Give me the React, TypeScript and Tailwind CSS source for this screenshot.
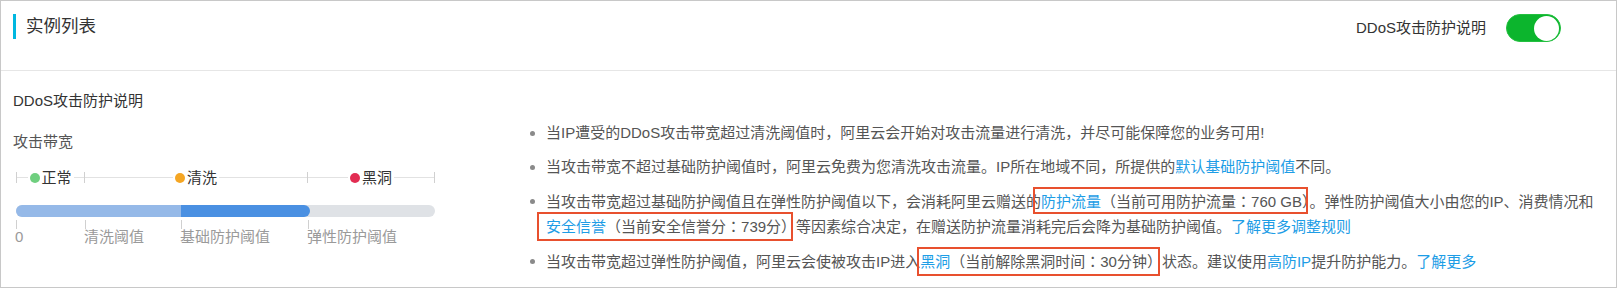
import React from "react";

const Box = ({ children, cls }: { children: React.ReactNode; cls: string }) => (
  <span className="relative">
    {children}
    <span className={"pointer-events-none absolute border-2 border-[#e8502e] " + cls} />
  </span>
);

const A = ({ children }: { children: React.ReactNode }) => (
  <span className="text-[#1d9de6]">{children}</span>
);

const P = ({ children }: { children: React.ReactNode }) => (
  <span style={{ fontFamily: '"Noto Sans CJK TC", sans-serif' }}>{children}</span>
);

const Li = ({ children }: { children: React.ReactNode }) => (
  <li className="flex items-start mb-[10px]">
    <span className="flex h-[24px] w-[25px] shrink-0 items-center pl-[9px]">
      <span className="h-[5px] w-[5px] rounded-full bg-[#8a8a8a]" />
    </span>
    <span className="w-[1060px]">{children}</span>
  </li>
);

export default function App() {
  return (
    <div
      className="h-[288px] w-[1617px] border border-[#c8c8c8] bg-white text-[15px] text-[#555]"
      style={{ fontFamily: '"Liberation Sans", "Noto Sans CJK SC", sans-serif' }}
    >
      <div className="flex h-[70px] justify-between border-b border-[#e6e6e6] px-[12px]">
        <div className="mt-[13px] flex h-[25px] items-center">
          <span className="h-[25px] w-[3px] bg-[#00b7e0]" />
          <span className="ml-[10px] text-[17.5px] leading-[25px] text-[#333]">实例列表</span>
        </div>
        <div className="mt-[13px] mr-[43px] flex h-[28px] items-center">
          <span className="text-[#333]">DDoS攻击防护说明</span>
          <span className="ml-[20px] flex h-[28px] w-[55px] items-center justify-end rounded-full border border-[#24c040] bg-[#0cb52d] pr-[1px]">
            <span className="h-[25px] w-[25px] rounded-full bg-white" />
          </span>
        </div>
      </div>
      <div className="flex">
        <div className="w-[520px] shrink-0 pl-[12px]">
          <div className="mt-[20px] leading-[20px] text-[#333]">DDoS攻击防护说明</div>
          <div className="mt-[21px] leading-[20px] text-[#555]">攻击带宽</div>
          <div className="ml-[3px] w-[419px]">
            <div className="mt-[20px] flex h-[11px] items-center text-[#333]">
              {[
                { w: "w-[68px]", c: "bg-[#6fcf7f]", t: "正常" },
                { w: "w-[223px]", c: "bg-[#f5a623]", t: "清洗" },
                { w: "w-[127px]", c: "bg-[#e22c52]", t: "黑洞" },
              ].map((s) => (
                <div key={s.t} className={"flex h-[11px] items-center border-l border-[#d0d0d0] " + s.w}>
                  <span className="h-px flex-1 bg-[#e2e2e2]" />
                  <span className="flex items-center gap-[2px] px-[2px] leading-[20px]">
                    <span className={"h-[10px] w-[10px] rounded-full " + s.c} />
                    {s.t}
                  </span>
                  <span className="h-px flex-1 bg-[#e2e2e2]" />
                </div>
              ))}
              <span className="h-[11px] w-px bg-[#d0d0d0]" />
            </div>
            <div className="mt-[22px] flex h-[12px] w-[419px] overflow-hidden rounded-full bg-[#dfe2e6]">
              <span className="w-[165px] bg-[#95b9e8]" />
              <span className="w-[129px] rounded-r-full bg-[#4a90e2]" />
            </div>
            <div className="mt-[3px] flex text-[#9a9a9a]">
              {[
                { w: "w-[69px]", t: "0" },
                { w: "w-[96px]", t: "清洗阈值" },
                { w: "w-[127px]", t: "基础防护阈值" },
                { w: "w-[120px]", t: "弹性防护阈值" },
              ].map((s) => (
                <div key={s.t} className={"flex flex-col " + s.w}>
                  <span className="h-[9px] w-px bg-[#d0d0d0]" />
                  <span className="-ml-[1px] whitespace-nowrap leading-[16px]">{s.t}</span>
                </div>
              ))}
            </div>
          </div>
        </div>
        <ul className="pt-[50px] leading-[24px] text-[#555]">
          <Li>当IP遭受的DDoS攻击带宽超过清洗阈值时，阿里云会开始对攻击流量进行清洗，并尽可能保障您的业务可用!</Li>
          <Li>
            当攻击带宽不超过基础防护阈值时，阿里云免费为您清洗攻击流量。IP所在地域不同，所提供的<A>默认基础防护阈值</A>不同。
          </Li>
          <Li>
            当攻击带宽超过基础防护阈值且在弹性防护阈值以下，会消耗阿里云赠送的
            <Box cls="-left-[8px] right-[1px] -top-[6px] -bottom-[4px]">
              <A>防护流量</A>（当前可用防护流量<P>：</P>760 GB）
            </Box>
            。弹性防护阈值大小由您的IP、消费情况和
            <Box cls="-left-[9px] right-[3px] -top-[6px] -bottom-[6px]">
              <A>安全信誉</A>（当前安全信誉分<P>：</P>739分）
            </Box>
            等因素综合决定，在赠送防护流量消耗完后会降为基础防护阈值。<A>了解更多调整规则</A>
          </Li>
          <Li>
            当攻击带宽超过弹性防护阈值，阿里云会使被攻击IP进入
            <Box cls="-left-[3px] right-[2px] -top-[6px] -bottom-[6px]">
              <A>黑洞</A>（当前解除黑洞时间<P>：</P>30分钟）
            </Box>
            状态。建议使用<A>高防IP</A>提升防护能力。<A>了解更多</A>
          </Li>
        </ul>
      </div>
    </div>
  );
}
